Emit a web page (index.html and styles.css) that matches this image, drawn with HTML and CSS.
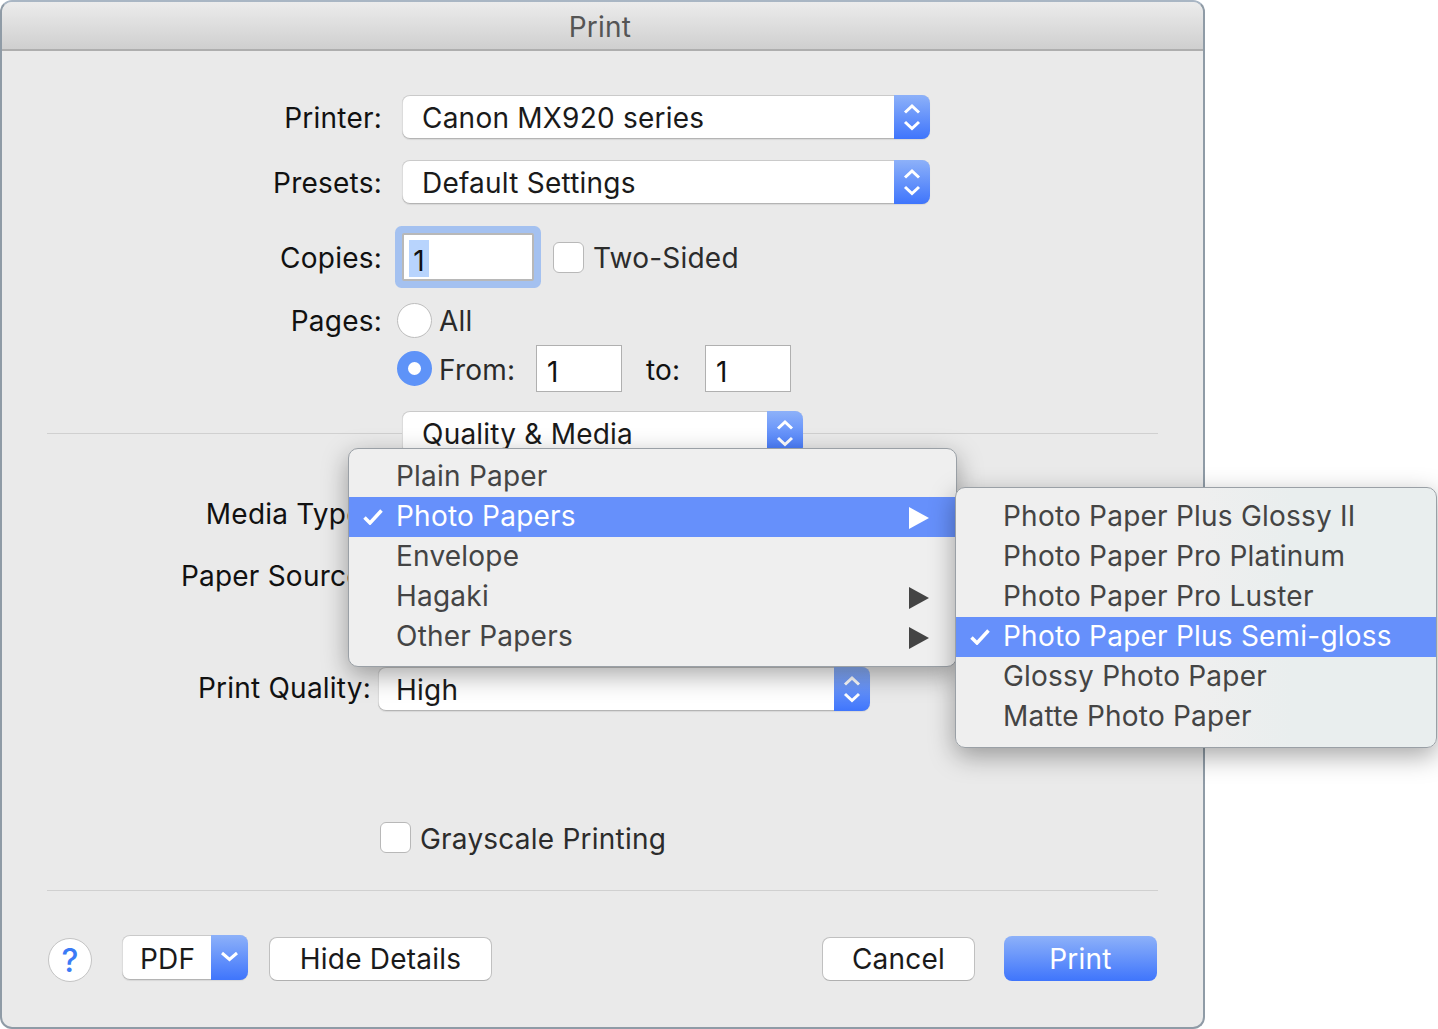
FILE: index.html
```html
<html>
  <head>
    <meta charset="UTF-8" />
    <title>Print</title>
    <link rel="stylesheet" href="styles.css">
  </head>
  <body>
    <div class="window">
      <div class="titlebar">Print</div>

      <div class="main">
        <div class="row">
          <div class="label shift">Printer:</div>
          <div class="select wide">
            <span class="value">Canon MX920 series</span>
            <span class="stepper"><svg width="36" height="44" viewBox="0 0 36 44"><path d="M11 17.500 18 11 25 17.500M11 27 18 33.500 25 27" /></svg></span>
          </div>
        </div>

        <div class="row presets">
          <div class="label shift">Presets:</div>
          <div class="select wide">
            <span class="value">Default Settings</span>
            <span class="stepper"><svg width="36" height="44" viewBox="0 0 36 44"><path d="M11 17.500 18 11 25 17.500M11 27 18 33.500 25 27" /></svg></span>
          </div>
        </div>

        <div class="row copies">
          <div class="label shift">Copies:</div>
          <div class="field focused"><span class="selected">1</span></div>
          <div class="checkbox"></div>
          <div class="check-text shift">Two-Sided</div>
        </div>

        <div class="row pages">
          <div class="label">Pages:</div>
          <div class="radio"></div>
          <div class="radio-text">All</div>
        </div>

        <div class="row from">
          <div class="label"></div>
          <div class="radio on"></div>
          <div class="radio-text shift from-text">From:</div>
          <div class="field small">1</div>
          <div class="to-text shift">to:</div>
          <div class="field small">1</div>
        </div>

        <div class="tabs">
          <hr class="line left" />
          <div class="select tab-select">
            <span class="value">Quality &amp; Media</span>
            <span class="stepper"><svg width="36" height="44" viewBox="0 0 36 44"><path d="M11 17.500 18 11 25 17.500M11 27 18 33.500 25 27" /></svg></span>
          </div>
          <hr class="line" />
        </div>

        <div class="row media">
          <div class="label inner">Media Type:</div>
        </div>

        <div class="row source">
          <div class="label inner">Paper Source:</div>
        </div>

        <div class="row quality">
          <div class="label inner raised">Print Quality:</div>
          <div class="select inner-select">
            <span class="value small-pad">High</span>
            <span class="stepper"><svg width="36" height="44" viewBox="0 0 36 44"><path d="M11 17.500 18 11 25 17.500M11 27 18 33.500 25 27" /></svg></span>
          </div>
        </div>

        <div class="row grayscale">
          <div class="label inner"></div>
          <div class="checkbox gray-box"></div>
          <div class="check-text shift">Grayscale Printing</div>
        </div>

        <hr class="line bottom-line" />

        <div class="footer">
          <div class="help">?</div>
          <div class="select pdf">
            <span class="pdf-text">PDF</span>
            <span class="stepper"><svg width="37" height="45" viewBox="0 0 37 45"><path d="M11 18 18.500 24.500 26 18" /></svg></span>
          </div>
          <div class="button details">Hide Details</div>
          <div class="spacer"></div>
          <div class="button cancel">Cancel</div>
          <div class="button primary">Print</div>
        </div>
      </div>

      <div class="menu type-menu">
        <div class="item">Plain Paper</div>
        <div class="item active">
          <svg class="tick" width="20" height="16" viewBox="0 0 20 16"><path d="M1.500 8.500 7 14 18.500 1.500" /></svg>
          Photo Papers
          <svg class="arrow" width="20" height="22" viewBox="0 0 20 22"><path d="M0 0 20 11 0 22Z" /></svg>
        </div>
        <div class="item">Envelope</div>
        <div class="item">Hagaki
          <svg class="arrow" width="20" height="22" viewBox="0 0 20 22"><path d="M0 0 20 11 0 22Z" /></svg>
        </div>
        <div class="item">Other Papers
          <svg class="arrow" width="20" height="22" viewBox="0 0 20 22"><path d="M0 0 20 11 0 22Z" /></svg>
        </div>
      </div>

      <div class="menu photo-menu">
        <div class="item">Photo Paper Plus Glossy II</div>
        <div class="item">Photo Paper Pro Platinum</div>
        <div class="item">Photo Paper Pro Luster</div>
        <div class="item active">
          <svg class="tick" width="20" height="16" viewBox="0 0 20 16"><path d="M1.500 8.500 7 14 18.500 1.500" /></svg>
          Photo Paper Plus Semi-gloss
        </div>
        <div class="item">Glossy Photo Paper</div>
        <div class="item">Matte Photo Paper</div>
      </div>
    </div>
  </body>
</html>
```

FILE: styles.css
```css
html, body {
  margin: 0;
  padding: 0;
  background: #fff;
}

body {
  width: 1438px;
  height: 1029px;
  overflow: hidden;
  font-family: Inter, "Liberation Sans", sans-serif;
  font-size: 28px;
  letter-spacing: 0.22px;
  color: #1a1a1a;
}

.window {
  position: relative;
  box-sizing: border-box;
  width: 1205px;
  height: 1029px;
  border: 2px solid #8f9ba6;
  border-top-color: #a9b6c4;
  border-radius: 12px;
  background: #eaeaea;
}

.titlebar {
  box-sizing: border-box;
  height: 49px;
  padding-right: 5px;
  border-bottom: 2px solid #aeaeae;
  border-radius: 10px 10px 0 0;
  background: linear-gradient(#ececec, #cfcfcf);
  color: #555;
  line-height: 50px;
  text-align: center;
}

.main {
  padding-top: 44px;
}

.row {
  display: flex;
  align-items: center;
}

/* text sits a pixel lower than the flex centre */
.shift {
  padding-top: 2px;
}

.label {
  flex: none;
  width: 380px;
  margin-right: 20px;
  color: #111;
  text-align: right;
}

.label.inner {
  width: 369px;
  margin-right: 7px;
}

.label.raised {
  padding-bottom: 3px;
}

/* popup buttons */
.select {
  display: flex;
  flex: none;
  box-sizing: border-box;
  height: 44px;
  align-items: center;
  justify-content: space-between;
  overflow: hidden;
  border-radius: 8px;
  background: #fff;
  box-shadow: inset 0 1px 0 #cacaca, inset 0 -1px 0 #b4b4b4, inset 1px 0 0 #dcdcdc, 0 1px 1px rgba(0, 0, 0, 0.08);
}

.value {
  padding-top: 2px;
  padding-left: 20px;
  white-space: nowrap;
}

.value.small-pad {
  padding-left: 18px;
}

.stepper {
  display: block;
  flex: none;
  background: linear-gradient(#8db1f9, #3f75fc);
}

.stepper svg {
  display: block;
  fill: none;
  stroke: #fff;
  stroke-width: 3;
}

.wide {
  width: 528px;
}

.presets {
  margin-top: 21px;
}

.copies {
  margin-top: 29px;
}

.field {
  box-sizing: border-box;
  flex: none;
  width: 132px;
  height: 48px;
  border: 1px solid #b4b4b4;
  background: #fff;
  color: #111;
  line-height: 52px;
}

.field.focused {
  padding-left: 5px;
  border: 2px solid #b8b8b8;
  border-radius: 2px;
  box-shadow: 0 0 0 7px #a4c1f0;
}

.selected {
  display: inline-block;
  width: 20px;
  height: 37px;
  margin-top: 5px;
  background: #b8d4fd;
  line-height: 43px;
  text-align: center;
  vertical-align: top;
}

.checkbox {
  flex: none;
  box-sizing: border-box;
  width: 31px;
  height: 31px;
  margin-left: 19px;
  margin-right: 9px;
  border: 1px solid #b8b8b8;
  border-radius: 6px;
  background: #fff;
}

.check-text {
  color: #2c2c2c;
}

.gray-box {
  margin-left: 2px;
}

.pages {
  margin-top: 22px;
}

.from {
  margin-top: 7px;
}

.radio {
  flex: none;
  box-sizing: border-box;
  width: 35px;
  height: 35px;
  margin-left: -5px;
  margin-right: 7px;
  border: 1px solid #bdbdbd;
  border-radius: 50%;
  background: #fff;
}

.radio.on {
  border: 11px solid #5e93f8;
}

.radio-text {
  color: #2a2a2a;
}

.from-text {
  width: 97px;
}

.field.small {
  width: 86px;
  height: 47px;
  padding-left: 10px;
  border: 1px solid #b0b0b0;
}

.to-text {
  width: 59px;
  margin-left: 24px;
  color: #111;
}

/* tab popup sits on the divider */
.tabs {
  display: flex;
  align-items: center;
  margin: 19px 45px 0 45px;
}

.line {
  flex: 1;
  height: 1px;
  margin: 1px 0 0;
  border: 0;
  background: #d0d0d0;
}

.line.left {
  flex: none;
  width: 355px;
}

.tab-select {
  width: 401px;
}

.media {
  height: 44px;
  margin-top: 37px;
}

.source {
  height: 44px;
  margin-top: 18px;
}

.quality {
  margin-top: 69px;
}

.inner-select {
  width: 492px;
}

.grayscale {
  height: 31px;
  margin-top: 111px;
}

.line.bottom-line {
  margin: 37px 45px 0 45px;
}

.footer {
  display: flex;
  align-items: flex-start;
  height: 46px;
  margin: 44px 46px 0 46px;
}

.help {
  flex: none;
  box-sizing: border-box;
  width: 44px;
  height: 44px;
  margin-top: 3px;
  border: 1px solid #c4c4c4;
  border-radius: 50%;
  background: #fff;
  color: #3b7bf6;
  font-size: 32px;
  font-weight: 500;
  line-height: 43px;
  text-align: center;
}

.select.pdf {
  width: 126px;
  height: 45px;
  margin-left: 30px;
}

.pdf-text {
  padding-top: 3px;
  padding-left: 18px;
}

.button {
  flex: none;
  box-sizing: border-box;
  height: 44px;
  margin-top: 2px;
  border: 1px solid #c0c0c0;
  border-bottom-color: #b0b0b0;
  border-radius: 8px;
  background: #fff;
  line-height: 42px;
  text-align: center;
}

.details {
  width: 223px;
  margin-left: 21px;
}

.spacer {
  flex: 1;
}

.cancel {
  width: 153px;
}

.button.primary {
  width: 153px;
  height: 45px;
  margin-top: 1px;
  margin-left: 29px;
  border: 0;
  background: linear-gradient(#8db1f9, #3f75fc);
  color: #fff;
  line-height: 47px;
}

/* popup menus */
.menu {
  position: absolute;
  box-sizing: border-box;
  border: 1px solid #9aa0a6;
  border-radius: 10px;
  background: #efefef;
  color: #444;
  box-shadow: 0 8px 26px rgba(0, 0, 0, 0.35);
}

.type-menu {
  left: 346px;
  top: 446px;
  width: 609px;
  height: 219px;
  padding: 8px 0;
}

.photo-menu {
  left: 953px;
  top: 485px;
  width: 482px;
  height: 261px;
  padding: 9px 0;
  background: linear-gradient(90deg, #efefef 0, #efefef 50%, #e9eeee 70%);
}

.item {
  position: relative;
  box-sizing: border-box;
  height: 40px;
  padding-left: 47px;
  line-height: 39px;
  white-space: nowrap;
}

.item.active {
  background: #6690fb;
  color: #fff;
}

.tick {
  position: absolute;
  left: 14px;
  top: 12px;
  fill: none;
  stroke: #fff;
  stroke-width: 3.5;
}

.arrow {
  position: absolute;
  right: 27px;
  top: 10px;
  fill: #444;
}

.item.active .arrow {
  fill: #fff;
}
```
